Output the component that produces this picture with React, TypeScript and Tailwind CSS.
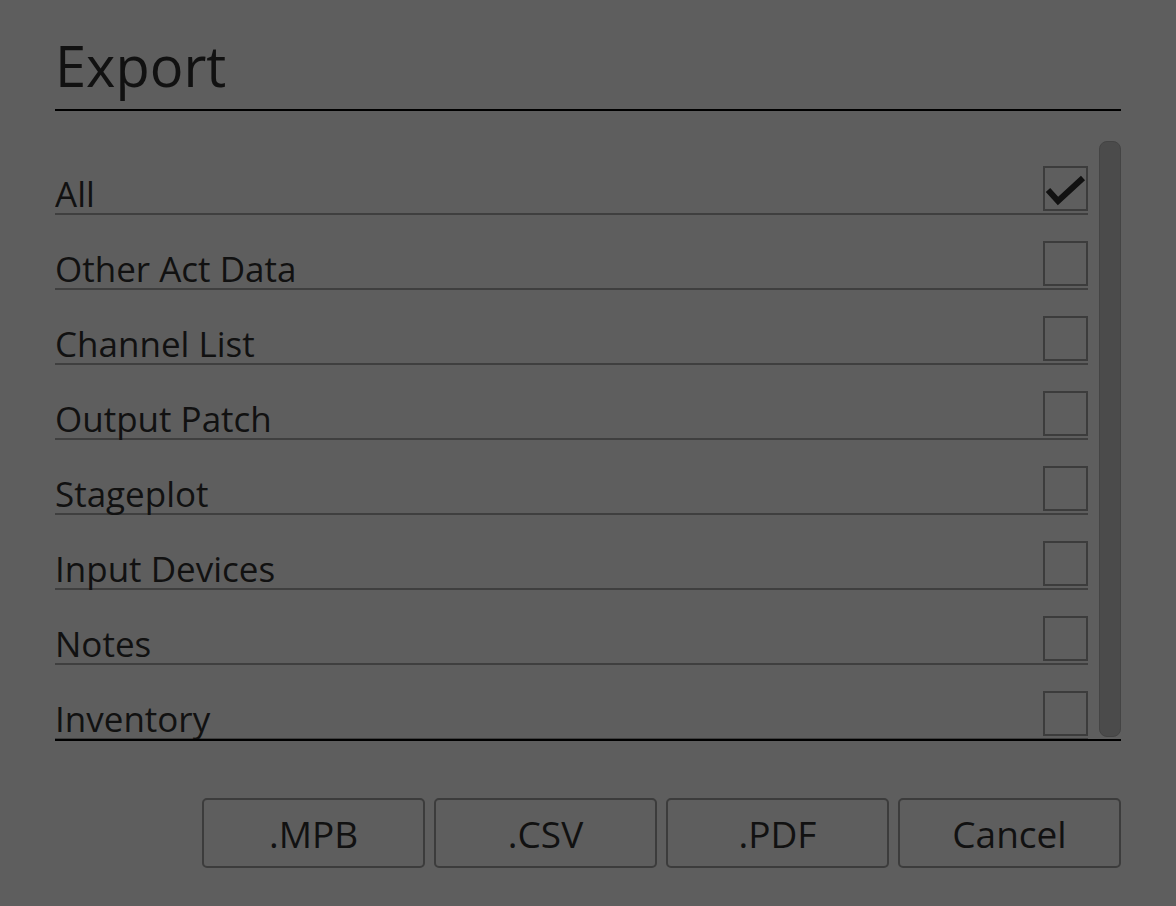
import { useState } from 'react';

const items = [
  'All',
  'Other Act Data',
  'Channel List',
  'Output Patch',
  'Stageplot',
  'Input Devices',
  'Notes',
  'Inventory',
];

export default function App() {
  const [checked, setChecked] = useState<string[]>(['All']);

  const toggle = (name: string) => {
    setChecked((c) => (c.includes(name) ? c.filter((x) => x !== name) : [...c, name]));
  };

  return (
    <div className="h-[906px] w-[1176px] bg-[#5e5e5e] px-[55px] font-['Open_Sans',sans-serif] text-[#111111]">
      {/* Title */}
      <h1 className="border-b-2 border-black pt-[37px] pb-[16px] text-[56px] leading-none">Export</h1>

      {/* List */}
      <div className="mt-[29px] flex h-[601px] overflow-hidden border-b-2 border-black">
        <div className="flex-1">
          {items.map((name) => (
            <div
              key={name}
              onClick={() => toggle(name)}
              className="flex h-[75px] items-end justify-between border-b-2 border-[#3f3f3f] pb-[2px]"
            >
              <span className="text-[35px] leading-none">{name}</span>
              <div className="flex h-[45px] w-[45px] items-center justify-center border-2 border-[#3c3c3c]">
                {checked.includes(name) && (
                  <svg width="41" height="41" viewBox="0 0 41 41">
                    <polyline
                      points="3,22 13,33 38,10"
                      fill="none"
                      stroke="#111"
                      strokeWidth="6"
                      strokeLinejoin="miter"
                    />
                  </svg>
                )}
              </div>
            </div>
          ))}
        </div>
        <div className="ml-[11px] mt-[1px] h-[596px] w-[22px] rounded-[8px] border border-[#444] bg-[#4b4b4b]" />
      </div>

      {/* Buttons */}
      <div className="mt-[57px] flex justify-end gap-[9px]">
        {['.MPB', '.CSV', '.PDF', 'Cancel'].map((b) => (
          <button
            key={b}
            className="flex h-[70px] w-[223px] items-center justify-center rounded-[5px] border-2 border-[#3c3c3c] text-[37px] leading-none text-[#111]"
          >
            {b}
          </button>
        ))}
      </div>
    </div>
  );
}
